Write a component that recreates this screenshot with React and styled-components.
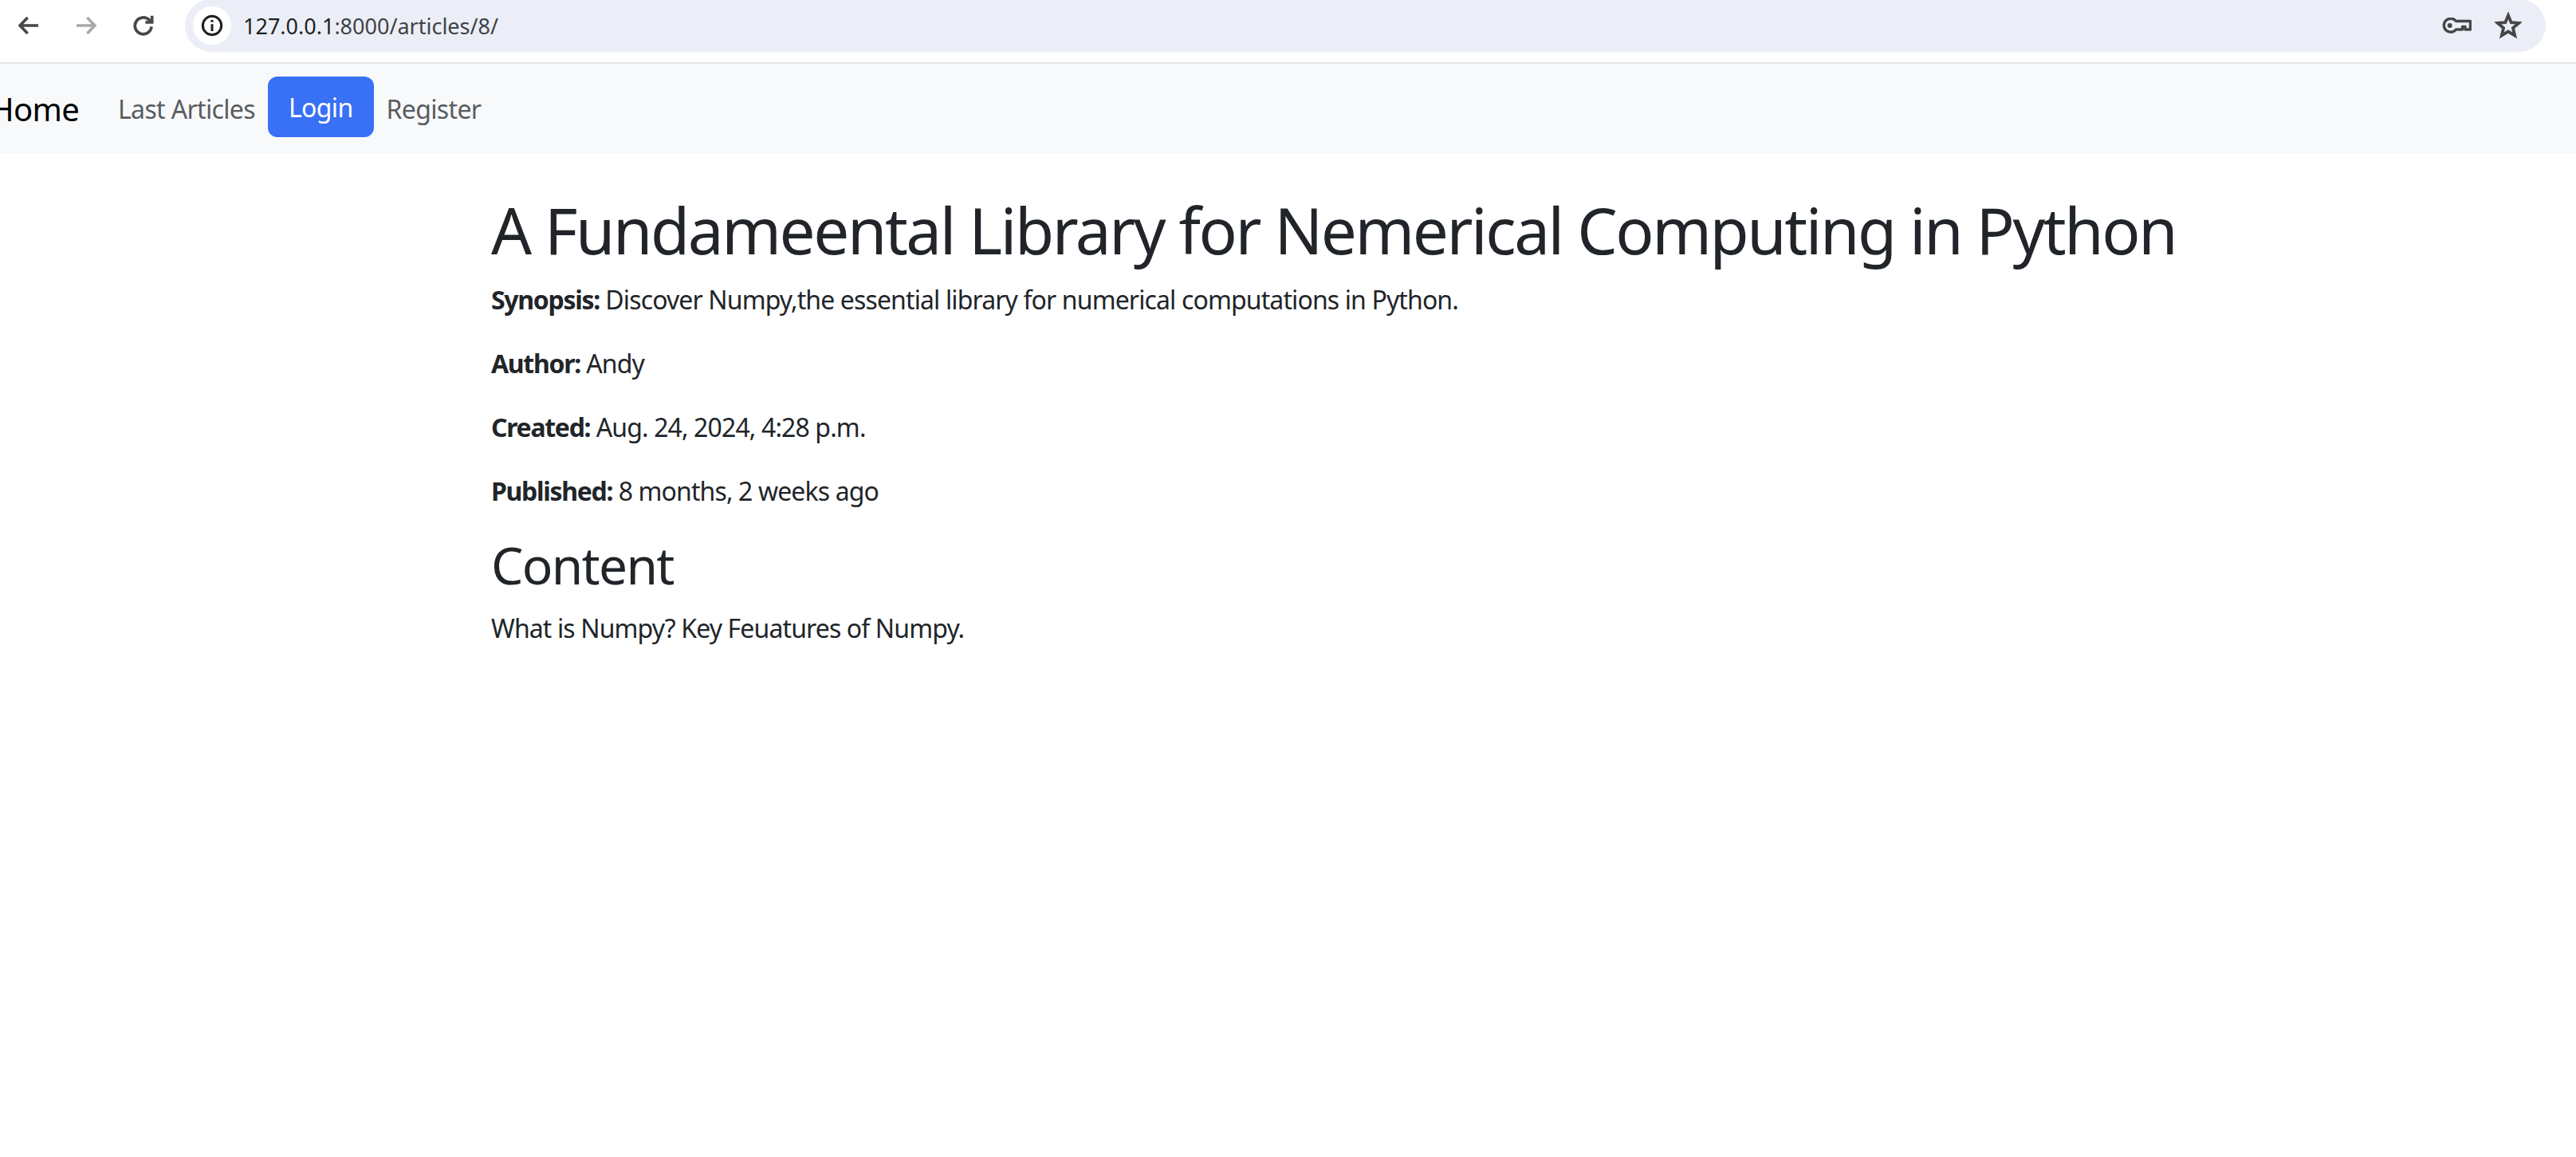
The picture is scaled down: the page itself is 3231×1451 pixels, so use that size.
import React from 'react';
import styled, { createGlobalStyle } from 'styled-components';

const Global = createGlobalStyle`
  html, body { margin: 0; padding: 0; background: #fff; overflow: hidden; }
  body { font-family: "Noto Sans", "Open Sans", sans-serif; }
`;
const Page = styled.div`width: 3231px; height: 1451px; overflow: hidden; display: flex; flex-direction: column;`;
const Toolbar = styled.div`
  height: 80px; flex: none; box-sizing: border-box; display: flex; align-items: flex-start;
  background: #fff; border-bottom: 2px solid #e3e3e3;
`;
const NavIcons = styled.div`display: flex; align-items: center; height: 64px; padding-left: 18px; gap: 36px;`;
const IconButton = styled.span`display: flex; width: 36px; height: 36px; align-items: center; justify-content: center; color: ${p => p.$dim ? '#a9a9a9' : '#474747'};`;
const Omnibox = styled.div`
  margin-left: 34px; width: 2961px; height: 66px; box-sizing: border-box; background: #ebeef6;
  border-radius: 33px; margin-top: -1px; display: flex; align-items: center; padding: 0 30px 0 10px;
`;
const InfoChip = styled.span`width: 48px; height: 48px; border-radius: 24px; background: #fff; display: flex; align-items: center; justify-content: center; color: #1f1f1f;`;
const Url = styled.span`margin-left: 15px; font-size: 27px; color: #3f4146; flex: 1;`;
const UrlHost = styled.span`color: #1f1f1f;`;
const OmniActions = styled.div`display: flex; align-items: center; gap: 29px; color: #474747;`;
const Navbar = styled.nav`
  height: 112px; flex: none; background: #f8f9fa; display: flex; align-items: center; box-sizing: border-box;
  overflow: hidden;
`;
const Brand = styled.a`font-size: 40px; letter-spacing: -0.7px; color: #000; margin-left: -12px; width: 110px; margin-right: 34px; white-space: nowrap;`;
const NavLinks = styled.div`display: flex; align-items: center;`;
const NavLink = styled.a`
  font-size: 32px; letter-spacing: -0.65px; color: ${p => p.$active ? '#fff' : '#595c5f'}; white-space: nowrap; box-sizing: border-box;
  height: 76px; display: flex; align-items: center; padding: 0 ${p => p.$active ? 26 : 16}px;
  background: ${p => p.$active ? '#3870f6' : 'transparent'}; border-radius: 12px; margin-top: ${p => p.$active ? -4 : 0}px;
`;
const Main = styled.main`padding: 48px 0 0 616px; color: #212529;`;
const Title = styled.h1`margin: 0 0 16px; font-size: 80px; letter-spacing: -2.45px; font-weight: 400; line-height: 96px; white-space: nowrap;`;
const Para = styled.p`margin: 0 0 32px; font-size: 32px; letter-spacing: -0.88px; line-height: 48px; white-space: nowrap;`;
const Label = styled.strong`font-weight: 700; letter-spacing: -1.3px;`;
const Heading = styled.h2`margin: -2px 0 17px; font-size: 64px; letter-spacing: -1.7px; font-weight: 400; line-height: 77px;`;

const Back = () => <svg width="32" height="32" viewBox="0 0 24 24" fill="none" stroke="currentColor" strokeWidth="2.7"><path d="M21 12H4M11 4.5 3.8 12l7.2 7.5" /></svg>;
const Forward = () => <svg width="32" height="32" viewBox="0 0 24 24" fill="none" stroke="currentColor" strokeWidth="2.7"><path d="M3 12h17M13 4.5l7.2 7.5-7.2 7.5" /></svg>;
const Reload = () => <svg width="32" height="32" viewBox="0 0 24 24" fill="none" stroke="currentColor" strokeWidth="2.8"><path d="M19.5 13a7.8 7.8 0 1 1-2.3-6.3L20 9" /><path d="M20 2.8V9h-6.2" /></svg>;
const Info = () => <svg width="28" height="28" viewBox="0 0 24 24" fill="none" stroke="currentColor" strokeWidth="2.6"><circle cx="12" cy="12" r="10" /><path d="M12 10.5V18" /><path d="M12 6v2.4" /></svg>;
const KeyIcon = () => <svg width="37" height="21" viewBox="0 0 37 21" fill="none" stroke="currentColor" strokeWidth="3.4"><path d="M17.5 4.5H35.5V15H29v-3.5h-3.5V15h-8A8.5 8.5 0 1 1 17.5 4.5Z" strokeLinejoin="round" /><circle cx="9.7" cy="10" r="3" fill="currentColor" stroke="none" /></svg>;
const Star = () => <svg width="34" height="34" viewBox="0 0 24 24" fill="none" stroke="currentColor" strokeWidth="2.7" strokeLinejoin="miter"><path d="M12 3l2.6 6.3 6.8.5-5.2 4.4 1.6 6.6L12 17.3l-5.8 3.5 1.6-6.6-5.2-4.4 6.8-.5z" /></svg>;

export default function App() {
  return (
    <Page>
      <Global />
      <Toolbar>
        <NavIcons>
          <IconButton><Back /></IconButton>
          <IconButton $dim><Forward /></IconButton>
          <IconButton><Reload /></IconButton>
        </NavIcons>
        <Omnibox>
          <InfoChip><Info /></InfoChip>
          <Url><UrlHost>127.0.0.1</UrlHost>:8000/articles/8/</Url>
          <OmniActions><KeyIcon /><Star /></OmniActions>
        </Omnibox>
      </Toolbar>
      <Navbar>
        <Brand>Home</Brand>
        <NavLinks>
          <NavLink>Last Articles</NavLink>
          <NavLink $active>Login</NavLink>
          <NavLink>Register</NavLink>
        </NavLinks>
      </Navbar>
      <Main>
        <Title>A Fundameental Library for Nemerical Computing in Python</Title>
        <Para><Label>Synopsis:</Label> Discover Numpy,the essential library for numerical computations in Python.</Para>
        <Para><Label>Author:</Label> Andy</Para>
        <Para><Label>Created:</Label> Aug. 24, 2024, 4:28 p.m.</Para>
        <Para><Label>Published:</Label> 8 months, 2 weeks ago</Para>
        <Heading>Content</Heading>
        <Para>What is Numpy? Key Feuatures of Numpy.</Para>
      </Main>
    </Page>
  );
}
